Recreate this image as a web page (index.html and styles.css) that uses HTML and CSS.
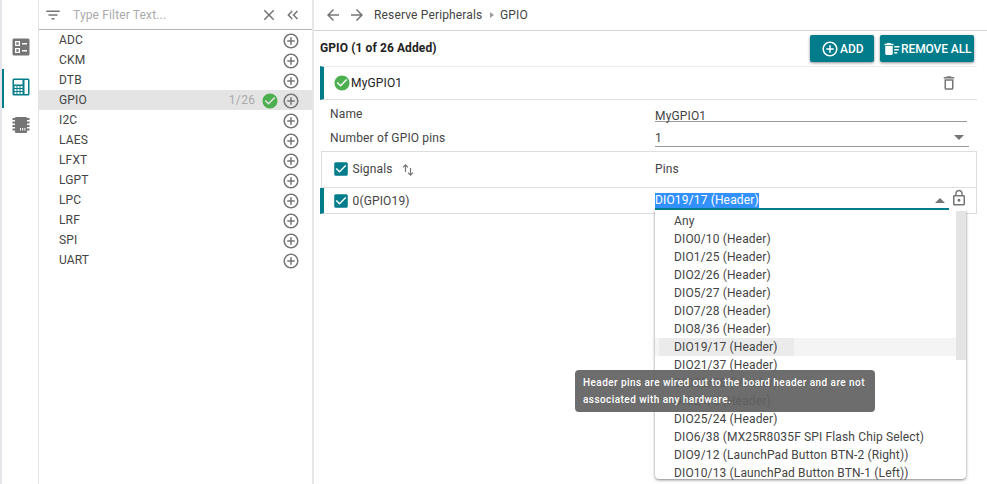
FILE: index.html
```html
<!DOCTYPE html>
<html lang="en">
<head>
<meta charset="utf-8">
<title>Reserve Peripherals - GPIO</title>
<link rel="stylesheet" href="styles.css">
</head>
<body>
<svg class="defs" width="0" height="0">
  <symbol id="plus" viewBox="0 0 24 24"><path d="M13 7h-2v4H7v2h4v4h2v-4h4v-2h-4V7zm-1-5C6.48 2 2 6.48 2 12s4.48 10 10 10 10-4.480 10-10S17.520 2 12 2zm0 18c-4.410 0-8-3.590-8-8s3.590-8 8-8 8 3.590 8 8-3.590 8-8 8z"/></symbol>
  <symbol id="ok" viewBox="0 0 24 24"><path d="M12 2C6.480 2 2 6.480 2 12s4.480 10 10 10 10-4.480 10-10S17.520 2 12 2zm-2 15l-5-5 1.410-1.410L10 14.170l7.590-7.590L19 8l-9 9z"/></symbol>
  <symbol id="check" viewBox="0 0 24 24"><path d="M19 3H5a2 2 0 0 0-2 2v14a2 2 0 0 0 2 2h14a2 2 0 0 0 2-2V5a2 2 0 0 0-2-2zm-9 14l-5-5 1.410-1.410L10 14.170l7.590-7.590L19 8l-9 9z"/></symbol>
  <symbol id="back" viewBox="0 0 24 24"><path d="M20 11H7.830l5.590-5.590L12 4l-8 8 8 8 1.410-1.410L7.830 13H20v-2z"/></symbol>
</svg>
<div class="app">
  <nav class="rail">
    <a class="rail-item"><svg viewBox="0 0 18 18"><path fill-rule="evenodd" d="M2 .5h14A1.500 1.500 0 0 1 17.500 2v14a1.500 1.500 0 0 1-1.500 1.500H2A1.500 1.500 0 0 1 .5 16V2A1.500 1.500 0 0 1 2 .5zM3 3v5h5V3zm1.300 1.300h2.400v2.400H4.300zM3 10v5h5v-5zm1.300 1.300h2.400v2.400H4.300zM10 5v1.500h5V5zm0 7v1.500h5V12z"/></svg></a>
    <a class="rail-item active"><svg viewBox="0 0 18 18"><path fill-rule="evenodd" d="M2 .5h14A1.500 1.500 0 0 1 17.500 2v14a1.500 1.500 0 0 1-1.500 1.500H2A1.500 1.500 0 0 1 .5 16V2A1.500 1.500 0 0 1 2 .5zM2 2v4.500h8.500V2zM12.500 2v14H16V2zM2.500 8v2h2V8zm3 0v2h2V8zm3 0v2h2V8zm-6 3v2h2v-2zm3 0v2h2v-2zm3 0v2h2v-2zm-6 3v2h2v-2zm3 0v2h2v-2zm3 0v2h2v-2z"/></svg></a>
    <a class="rail-item"><svg viewBox="0 0 18 18"><path fill-rule="evenodd" d="M4 1h10a1 1 0 0 1 1 1h2.500v2H15v1.500h2.500v2H15V9h2.500v2H15v1.500h2.500v2H15V16a1 1 0 0 1-1 1H4a1 1 0 0 1-1-1v-1.500H.5v-2H3V11H.5V9H3V7.500H.5v-2H3V4H.5V2H3a1 1 0 0 1 1-1zM8 12v2.500h1V12zm2.200 0v2.500h1V12zm2.200 0v2.500h1V12z"/></svg></a>
  </nav>
  <aside class="side">
    <div class="filter">
      <svg class="ic18" viewBox="0 0 24 24"><path d="M10 18h4v-2h-4v2zM3 6v2h18V6H3zm3 7h12v-2H6v2z"/></svg>
      <span class="placeholder">Type Filter Text...</span>
      <svg class="ic18" viewBox="0 0 24 24"><path d="M19 6.410L17.590 5 12 10.590 6.410 5 5 6.410 10.590 12 5 17.590 6.410 19 12 13.410 17.590 19 19 17.590 13.410 12z"/></svg>
      <svg class="ic18 collapse" viewBox="0 0 24 24"><path d="M11.700 7.400L10.300 6l-6 6 6 6 1.400-1.400L7.100 12zM18.700 7.400L17.300 6l-6 6 6 6 1.400-1.400-4.600-4.600z"/></svg>
    </div>
    <ul class="list">
      <li>ADC<svg class="ic18"><use href="#plus"/></svg></li>
      <li>CKM<svg class="ic18"><use href="#plus"/></svg></li>
      <li>DTB<svg class="ic18"><use href="#plus"/></svg></li>
      <li class="selected">GPIO<span class="count">1/26</span><svg class="ic18 green"><use href="#ok"/></svg><svg class="ic18"><use href="#plus"/></svg></li>
      <li>I2C<svg class="ic18"><use href="#plus"/></svg></li>
      <li>LAES<svg class="ic18"><use href="#plus"/></svg></li>
      <li>LFXT<svg class="ic18"><use href="#plus"/></svg></li>
      <li>LGPT<svg class="ic18"><use href="#plus"/></svg></li>
      <li>LPC<svg class="ic18"><use href="#plus"/></svg></li>
      <li>LRF<svg class="ic18"><use href="#plus"/></svg></li>
      <li>SPI<svg class="ic18"><use href="#plus"/></svg></li>
      <li>UART<svg class="ic18"><use href="#plus"/></svg></li>
    </ul>
  </aside>
  <main class="main">
    <header class="crumbs">
      <svg class="ic18"><use href="#back"/></svg>
      <svg class="ic18 flip"><use href="#back"/></svg>
      <span class="crumb">Reserve Peripherals</span><i class="sep"></i><span>GPIO</span>
    </header>
    <div class="titlebar">
      <h1>GPIO (1 of 26 Added)</h1>
      <button class="btn add"><svg class="ic18"><use href="#plus"/></svg>ADD</button>
      <button class="btn remove"><svg class="sweep" viewBox="0 0 24 24"><path d="M15 16h4v2h-4zm0-8h7v2h-7zm0 4h6v2h-6zM3 18c0 1.100.9 2 2 2h6c1.100 0 2-.9 2-2V8H3v10zM14 5h-3l-1-1H6L5 5H2v2h12z"/></svg>REMOVE ALL</button>
    </div>
    <section class="instance">
      <svg class="ic18 green"><use href="#ok"/></svg><span>MyGPIO1</span>
      <svg class="ic18 trash" viewBox="0 0 24 24"><path d="M6 19c0 1.100.9 2 2 2h8c1.100 0 2-.9 2-2V7H6v12zM8 9h8v10H8V9zm7.500-5l-1-1h-5l-1 1H5v2h14V4z"/></svg>
    </section>
    <div class="field name"><label>Name</label><span class="input">MyGPIO1</span></div>
    <div class="field number"><label>Number of GPIO pins</label><span class="input">1<i class="caret"></i></span></div>
    <section class="table">
      <div class="row head">
        <svg class="ic18 box"><use href="#check"/></svg><span class="signals">Signals
        <svg class="sort" viewBox="0 0 12 14"><path d="M3.500 9V2M1 4.300L3.500 1.800 6 4.300M8.500 5v7M6 9.700l2.500 2.500L11 9.700"/></svg></span>
        <span class="pins">Pins</span>
      </div>
      <div class="row body">
        <svg class="ic18 box"><use href="#check"/></svg><span>0(GPIO19)</span>
        <div class="combo">
          <mark>DIO19/17 (Header)</mark><i class="caret up"></i>
          <div class="menu">
            <ul class="options">
              <li>Any</li>
              <li>DIO0/10 (Header)</li>
              <li>DIO1/25 (Header)</li>
              <li>DIO2/26 (Header)</li>
              <li>DIO5/27 (Header)</li>
              <li>DIO7/28 (Header)</li>
              <li>DIO8/36 (Header)</li>
              <li class="current"><span>DIO19/17 (Header)</span></li>
              <li>DIO21/37 (Header)</li>
              <li>DIO22/38 (Header)</li>
              <li>DIO24/8 (Header)</li>
              <li>DIO25/24 (Header)</li>
              <li>DIO6/38 (MX25R8035F SPI Flash Chip Select)</li>
              <li>DIO9/12 (LaunchPad Button BTN-2 (Right))</li>
              <li>DIO10/13 (LaunchPad Button BTN-1 (Left))</li>
            </ul>
            <i class="thumb"></i>
            <div class="tooltip">Header pins are wired out to the board header and are not<br>associated with any hardware.</div>
          </div>
        </div>
        <svg class="lock" viewBox="0 0 24 24"><path d="M12 17c1.100 0 2-.9 2-2s-.9-2-2-2-2 .9-2 2 .9 2 2 2zm6-9h-1V6c0-2.760-2.240-5-5-5S7 3.240 7 6v2H6c-1.100 0-2 .9-2 2v10c0 1.100.9 2 2 2h12c1.100 0 2-.9 2-2V10c0-1.100-.9-2-2-2zM8.900 6c0-1.710 1.390-3.100 3.100-3.100s3.100 1.390 3.100 3.100v2H8.900V6zM18 20H6V10h12v10z"/></svg>
      </div>
    </section>
  </main>
</div>
</body>
</html>
```
FILE: styles.css
```css
* { box-sizing: border-box; }
body { margin: 0; overflow: hidden; background: #fff; color: #444; font: 12px/18px Roboto, "Liberation Sans", sans-serif; letter-spacing: .15px; }
ul { list-style: none; margin: 0; padding: 0; }
svg { fill: #757575; flex: none; display: block; }
.defs { position: absolute; }
.ic18 { width: 18px; height: 18px; }
svg.green { fill: #4caf50; }
.app { display: flex; width: 987px; height: 484px; }

.rail { width: 39px; border-left: 2px solid #e6e6ea; border-right: 1px solid #e4e4e4; padding-top: 28px; flex: none; }
.rail-item { display: flex; align-items: center; height: 39px; padding: 0 0 1px 10px; }
.rail-item svg { width: 18px; height: 18px; }
.rail-item.active { margin: 2px 0 -2px; padding: 0 0 4px 8px; border-left: 2px solid #007c8a; }
.rail-item.active svg { fill: #007c8a; }

.side { width: 275px; flex: none; border-right: 2px solid #e8e8e8; }
.filter { display: flex; align-items: center; height: 30px; border-bottom: 1px solid #b4b4b4; padding: 1px 10px 0 5px; }
.placeholder { flex: 1; margin-left: 11px; color: #aaa; }
.collapse { margin-left: 6px; }
.list li { display: flex; align-items: center; height: 20px; padding: 0 12.5px 0 20px; }
.list li svg { margin-top: 1px; }
.list li svg:last-child { margin-left: auto; }
.list li.selected { background: #e4e4e4; }
.list .count { margin-left: auto; margin-right: 5px; color: #aaa; letter-spacing: .4px; }
.list li.selected svg:last-child { margin-left: 3px; }

.main { flex: 1; min-width: 0; }
.crumbs { display: flex; align-items: center; height: 31px; border-bottom: 1px solid #d4d4d4; padding-left: 9.5px; }
.flip { transform: scaleX(-1); margin-left: 6px; }
.crumb { margin-left: 8.5px; }
.sep { width: 4px; height: 6px; margin: 0 6px 0 7.5px; background: #999; clip-path: polygon(0 0, 100% 50%, 0 100%); }

.titlebar { display: flex; align-items: flex-start; height: 35px; padding: 4px 13px 0 6px; }
h1 { flex: 1; margin: 4px 0 0; font-size: 12px; line-height: 18px; font-weight: 700; letter-spacing: .1px; color: #222; }
.btn { display: flex; align-items: center; height: 27px; border: 0; border-radius: 2px; background: #007c8a; color: #fff; font: 500 12px/18px Roboto, sans-serif; letter-spacing: 0; box-shadow: 0 1px 3px rgba(0,0,0,.45); white-space: nowrap; }
.btn svg { fill: #fff; }
.add { width: 64px; padding: 0 0 0 11px; gap: 1px; }
.remove { width: 94px; padding: 0 0 0 3px; margin-left: 6px; gap: 0; letter-spacing: -.1px; }
.sweep { width: 18px; height: 18px; }

.instance { display: flex; align-items: center; height: 34px; margin: 0 10px 0 6px; padding: 0 19px 0 9px; border-left: 4px solid #007c8a; border-top: 1px solid #eee; border-bottom: 1px solid #ddd; color: #222; }
.trash { margin-left: auto; }

.field { display: flex; margin: 0 10px 0 16px; }
.field label { width: 325px; flex: none; }
.name { height: 23px; padding-top: 5px; }
.name .input { width: 312px; height: 17px; border-bottom: 1px solid #999; padding-top: 2px; line-height: 18px; }
.number { height: 28px; padding-top: 6px; }
.number .input { display: flex; align-items: center; justify-content: space-between; width: 314px; height: 18px; border-bottom: 1px solid #999; padding-right: 5px; }
.caret { width: 10px; height: 5px; background: #757575; clip-path: polygon(0 0, 100% 0, 50% 100%); }
.caret.up { clip-path: polygon(50% 0, 100% 100%, 0 100%); }

.table { margin: 0 10px 0 6px; }
.row { display: flex; align-items: center; border-right: 1px solid #ddd; border-bottom: 1px solid #ddd; }
.box { width: 18px; height: 18px; margin-right: 3px; }
svg.box { fill: #007c8a; }
.head { height: 37px; margin-left: 1px; padding: 0 0 2px 9.5px; border-left: 1px solid #ddd; border-top: 1px solid #ddd; }
.signals { display: flex; align-items: center; width: 302.5px; }
.sort { width: 12px; height: 14px; margin: 2px 0 0 9px; stroke: #757575; stroke-width: 1.200; }
svg.sort { fill: none; }
.body { height: 26px; padding-left: 7.5px; border-left: 4px solid #007c8a; }
.combo { position: relative; display: flex; align-items: center; width: 294px; height: 19px; margin: 0 0 0 auto; padding: 2px 4px 0 0; border-bottom: 2px solid #007c8a; }
mark { background: #3390ff; color: #fff; line-height: 15px; margin-right: auto; }
.lock { width: 18px; height: 18px; margin: 0 8px 5px 1px; }
.menu { position: absolute; top: 19px; left: 0; width: 311px; height: 269px; background: #fff; border-radius: 0 0 4px 4px; box-shadow: 0 1px 3px rgba(0,0,0,.5); clip-path: inset(0 -5px -5px -100px); }
.options { padding-top: 2px; }
.options li { height: 18px; padding-left: 19px; white-space: nowrap; letter-spacing: .14px; }
.options .current { background: #f4f4f4; padding-left: 4px; }
.current span { display: block; width: 135px; padding-left: 15px; background: #ebebeb; }
.thumb { position: absolute; top: 1px; right: 0; width: 10px; height: 149px; background: #e4e4e4; }
.tooltip { position: absolute; top: 160px; left: -80px; width: 300px; height: 42px; padding: 4px 8px; border-radius: 4px; background: rgba(97,97,97,.92); color: #fff; font-size: 10px; line-height: 17px; font-weight: 500; letter-spacing: .44px; white-space: nowrap; }
```
